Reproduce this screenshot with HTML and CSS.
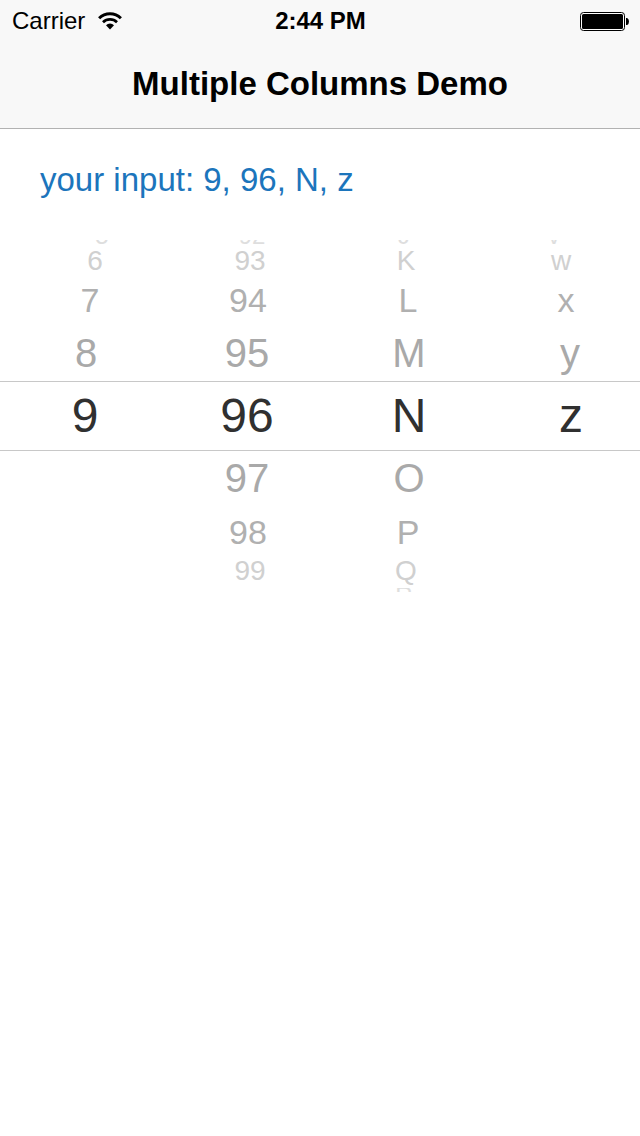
FILE: index.html
```html
<!DOCTYPE html>
<html lang="en">
<head>
<meta charset="utf-8">
<meta name="viewport" content="width=device-width, initial-scale=1">
<title>Multiple Columns Demo</title>
<link rel="stylesheet" href="styles.css">
</head>
<body>
<header class="top">
  <div class="status">
    <div class="carrier">
      <span>Carrier</span>
      <svg class="wifi" viewBox="0 0 24 18" aria-hidden="true">
        <path d="M1.1 6.2a15.6 15.6 0 0 1 21.8 0" fill="none" stroke="#000" stroke-width="3"/>
        <path d="M5 10.3a10 10 0 0 1 14 0" fill="none" stroke="#000" stroke-width="2.7"/>
        <path d="M8 13.2a5.7 5.7 0 0 1 8 0L12 17.6z"/>
      </svg>
    </div>
    <time class="clock">2:44 PM</time>
    <svg class="battery" viewBox="0 0 49 19" aria-hidden="true">
      <rect x=".5" y=".5" width="44" height="18" rx="3" fill="#fff" stroke="#000"/>
      <rect x="2" y="2" width="41" height="15" rx="1.5"/>
      <path d="M46 6h1.2q1.8 1 1.8 3.500t-1.800 3.500H46z"/>
    </svg>
  </div>
  <h1 class="title">Multiple Columns Demo</h1>
</header>
<main>
  <p class="result">your input: 9, 96, N, z</p>
  <div class="picker">
    <ul class="wheel from-left" role="listbox" aria-label="Digit">
      <li class="edge" role="option">5</li>
      <li class="far" role="option">6</li>
      <li class="mid" role="option">7</li>
      <li class="near" role="option">8</li>
      <li class="selected" role="option" aria-selected="true">9</li>
    </ul>
    <ul class="wheel from-left inner" role="listbox" aria-label="Number">
      <li class="edge" role="option">92</li>
      <li class="far" role="option">93</li>
      <li class="mid" role="option">94</li>
      <li class="near" role="option">95</li>
      <li class="selected" role="option" aria-selected="true">96</li>
      <li class="near" role="option">97</li>
      <li class="mid" role="option">98</li>
      <li class="far" role="option">99</li>
    </ul>
    <ul class="wheel from-right inner" role="listbox" aria-label="Capital letter">
      <li class="edge" role="option">J</li>
      <li class="far" role="option">K</li>
      <li class="mid" role="option">L</li>
      <li class="near" role="option">M</li>
      <li class="selected" role="option" aria-selected="true">N</li>
      <li class="near" role="option">O</li>
      <li class="mid" role="option">P</li>
      <li class="far" role="option">Q</li>
      <li class="edge bottom" role="option">R</li>
    </ul>
    <ul class="wheel from-right" role="listbox" aria-label="Small letter">
      <li class="edge" role="option">v</li>
      <li class="far" role="option">w</li>
      <li class="mid" role="option">x</li>
      <li class="near" role="option">y</li>
      <li class="selected" role="option" aria-selected="true">z</li>
    </ul>
  </div>
</main>
</body>
</html>
```

FILE: styles.css
```css
*,
*::after {
  box-sizing: border-box;
}

body {
  margin: 0;
  background: #fff;
  color: #000;
  font-family: "Liberation Sans", Arial, sans-serif;
}

.top {
  background: #f8f8f8;
  border-bottom: 1px solid #b2b2b2;
}

.status {
  display: grid;
  grid-template-columns: 1fr auto 1fr;
  align-items: center;
  height: 40px;
  padding: 0 11px 0 12px;
  font-size: 24px;
  line-height: 42px;
}

.carrier {
  display: flex;
  align-items: center;
  gap: 13px;
}

.wifi {
  width: 24px;
  height: 18px;
}

.clock {
  font-weight: bold;
}

.battery {
  justify-self: end;
  width: 49px;
  height: 19px;
}

.title {
  margin: 0;
  font-size: 33px;
  line-height: 88px;
  text-align: center;
}

.result {
  margin: 0;
  padding: 31px 40px 40px;
  color: #1c75bc;
  font-size: 33px;
  line-height: 40px;
}

.picker {
  position: relative;
  display: grid;
  grid-template-columns: repeat(4, minmax(0, 1fr));
  gap: 24px;
  padding-left: 16px;
}

/* Selection band across all the wheels */
.picker::after {
  content: "";
  position: absolute;
  top: 141px;
  left: 0;
  right: 0;
  height: 70px;
  border: solid #c8c8c8;
  border-width: 1px 0;
  pointer-events: none;
}

.wheel {
  --edge: 34px;
  --far: 20px;
  --mid: 10px;
  --near: 2px;
  margin: 0;
  padding: 0;
  list-style: none;
  text-align: center;
}

.wheel.inner {
  --edge: 10px;
  --far: 6px;
  --mid: 2px;
  --near: 0px;
}

.wheel li {
  padding: 0 0 0 var(--shift, 0px);
}

.wheel.from-right li {
  padding: 0 var(--shift, 0px) 0 0;
}

.wheel .selected {
  color: #303030;
  font-size: 48px;
  line-height: 62px;
}

.wheel .near {
  --shift: var(--near);
  color: #a9a9a9;
  font-size: 40px;
  line-height: 63px;
}

.wheel .mid {
  --shift: var(--mid);
  color: #b0b0b0;
  font-size: 34px;
  line-height: 44px;
}

.wheel .far {
  --shift: var(--far);
  color: #d0d0d0;
  font-size: 28px;
  line-height: 34px;
}

.wheel .edge {
  --shift: var(--edge);
  display: flex;
  flex-direction: column;
  justify-content: flex-end;
  height: 4px;
  overflow: hidden;
  color: #dedede;
  font-size: 24px;
  line-height: 16px;
}

.wheel .bottom {
  justify-content: flex-start;
}
```
